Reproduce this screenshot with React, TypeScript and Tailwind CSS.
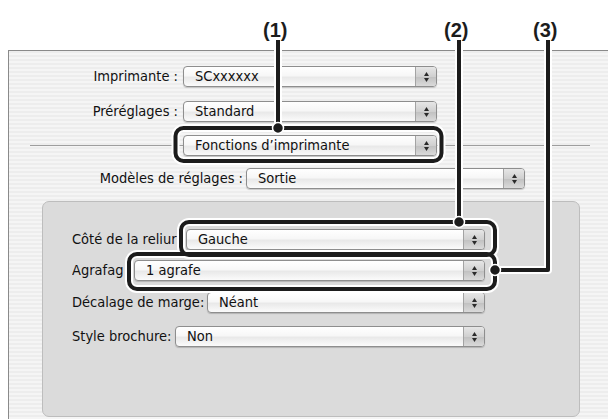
const LABEL_FONT = "font-['DejaVu_Sans_Condensed','DejaVu_Sans',sans-serif] font-stretch-condensed";

function Stepper() {
  return (
    <span className="flex w-[21px] flex-col items-center justify-center gap-[2px] rounded-r-[3px] border-l border-[#a3a3a3] bg-[linear-gradient(180deg,#e6e6e6_0%,#d0d0d0_50%,#c2c2c2_55%,#dadada_100%)]">
      <svg width="5" height="4" viewBox="0 0 5 4">
        <path d="M2.5 0 L5 4 L0 4 Z" fill="#2a2a2a" />
      </svg>
      <svg width="5" height="4" viewBox="0 0 5 4">
        <path d="M0 0 L5 0 L2.5 4 Z" fill="#2a2a2a" />
      </svg>
    </span>
  );
}

function Popup({ value, className = "" }: { value: string; className?: string }) {
  return (
    <div
      className={`flex h-[21px] items-stretch rounded-[4px] border border-[#8e8e8e] bg-[linear-gradient(180deg,#ffffff_0%,#f7f7f7_45%,#e9e9e9_55%,#fbfbfb_100%)] shadow-[0_1px_1px_rgba(0,0,0,0.18)] ${className}`}
    >
      <span className="flex-1 truncate pl-[11px] text-[14.5px] leading-[19px] text-[#111]">{value}</span>
      <Stepper />
    </div>
  );
}

function PanelRow({ label, labelWidth, value, className = "" }: { label: string; labelWidth: string; value: string; className?: string }) {
  return (
    <div className={`flex w-[413px] items-center ${className}`}>
      <span className={`${labelWidth} shrink-0 overflow-hidden whitespace-nowrap text-[14.5px] leading-[21px] text-[#111]`}>{label}</span>
      <Popup value={value} className="flex-1" />
    </div>
  );
}

function Callouts() {
  const boxes = [
    { x: 175.5, y: 128, w: 266, h: 33 },
    { x: 181, y: 222, w: 314, h: 33 },
    { x: 129, y: 254, w: 366, h: 35 },
  ];
  const lines = ["M278 40 L278 128", "M459 40 L459 222", "M548 40 L548 270 L495 270"];
  const dots = [
    [278, 128],
    [459, 222],
    [495, 270],
  ];
  return (
    <svg className="pointer-events-none absolute inset-0" width="608" height="419" viewBox="0 0 608 419">
      {boxes.map((b, i) => (
        <rect key={`h${i}`} x={b.x} y={b.y} width={b.w} height={b.h} rx="8" fill="none" stroke="#fff" strokeWidth="8" />
      ))}
      {lines.map((d, i) => (
        <path key={`lh${i}`} d={d} fill="none" stroke="#fff" strokeWidth="8" strokeLinejoin="round" />
      ))}
      {boxes.map((b, i) => (
        <rect key={`b${i}`} x={b.x} y={b.y} width={b.w} height={b.h} rx="8" fill="none" stroke="#1c1c1c" strokeWidth="4" />
      ))}
      {lines.map((d, i) => (
        <path key={`l${i}`} d={d} fill="none" stroke="#1c1c1c" strokeWidth="4" strokeLinejoin="round" />
      ))}
      {dots.map(([cx, cy], i) => (
        <circle key={`d${i}`} cx={cx} cy={cy} r="5.5" fill="#1c1c1c" stroke="#fff" strokeWidth="1.5" />
      ))}
    </svg>
  );
}

export default function App() {
  return (
    <div className={`relative h-[419px] w-[608px] overflow-hidden bg-white ${LABEL_FONT}`}>
      <div className="ml-[8px] mt-[50px] flex h-[369px] flex-col border-l border-t border-[#8a8a8a] bg-[repeating-linear-gradient(180deg,#ededed_0px,#ededed_2px,#f5f5f5_2px,#f5f5f5_4px)]">
        <div className="mt-[15px] flex items-center gap-[5px]">
          <span className="w-[169px] text-right text-[14.5px] leading-[21px] text-[#111]">Imprimante :</span>
          <Popup value="SCxxxxxx" className="w-[254px]" />
        </div>
        <div className="mt-[14px] flex items-center gap-[5px]">
          <span className="w-[169px] text-right text-[14.5px] leading-[21px] text-[#111]">Préréglages :</span>
          <Popup value="Standard" className="w-[254px]" />
        </div>
        <div className="mt-[13px] flex items-center">
          <div className="ml-[21px] h-px w-[153px] bg-[#9e9e9e]" />
          <Popup value="Fonctions d’imprimante" className="w-[254px]" />
          <div className="h-px w-[153px] bg-[#9e9e9e]" />
        </div>
        <div className="mt-[12px] flex items-center gap-[3px]">
          <span className="w-[234px] text-right text-[14.5px] leading-[21px] text-[#111]">Modèles de réglages :</span>
          <Popup value="Sortie" className="w-[279px]" />
        </div>
        <div className="mb-[2px] ml-[33px] mt-[12px] flex w-[538px] flex-1 flex-col rounded-[7px] border border-[#bdbdbd] bg-[#dbdbdb] pl-[29px] pt-[27px]">
          <PanelRow label="Côté de la reliur" labelWidth="w-[114px]" value="Gauche" />
          <PanelRow label="Agrafag" labelWidth="w-[62px]" value="1 agrafe" className="mt-[10px]" />
          <PanelRow label="Décalage de marge:" labelWidth="w-[135px]" value="Néant" className="mt-[11px]" />
          <PanelRow label="Style brochure:" labelWidth="w-[103px]" value="Non" className="mt-[13px]" />
        </div>
      </div>

      <Callouts />

      <span className="absolute left-[263px] top-[15px] font-['Liberation_Sans',Arial,sans-serif] text-[20px] font-bold text-[#1c1c1c]">(1)</span>
      <span className="absolute left-[444px] top-[15px] font-['Liberation_Sans',Arial,sans-serif] text-[20px] font-bold text-[#1c1c1c]">(2)</span>
      <span className="absolute left-[533px] top-[15px] font-['Liberation_Sans',Arial,sans-serif] text-[20px] font-bold text-[#1c1c1c]">(3)</span>
    </div>
  );
}
